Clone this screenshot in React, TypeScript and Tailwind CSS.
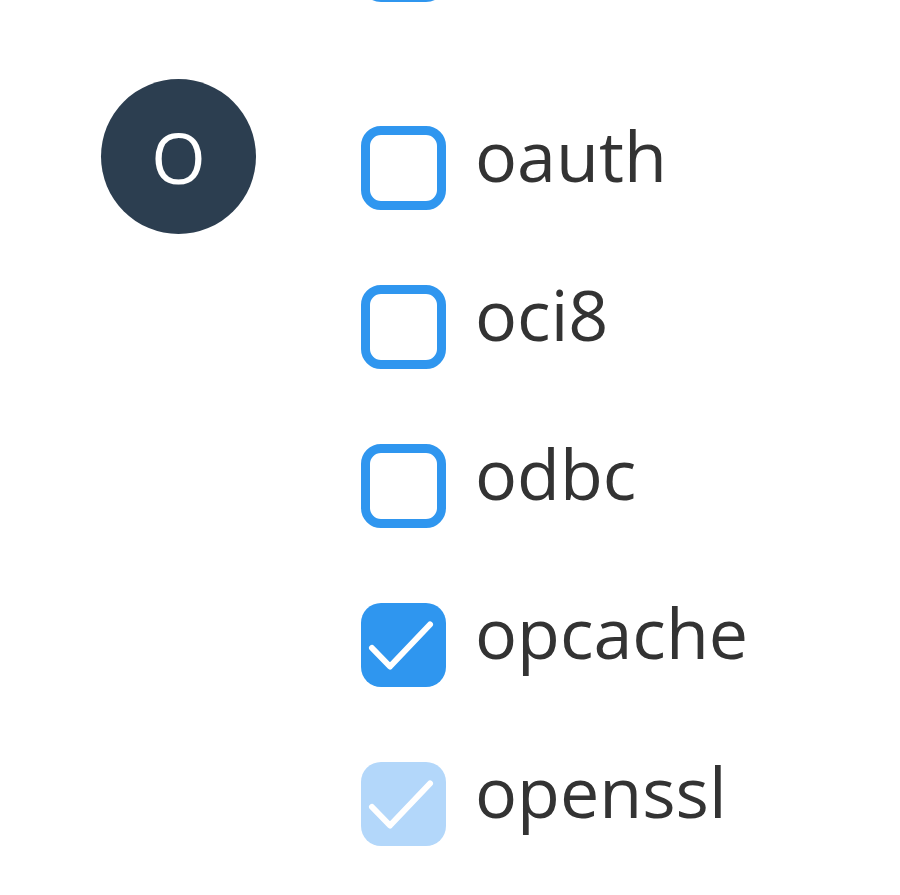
import React from 'react';

type Ext = { name: string; checked?: boolean; disabled?: boolean };

const groups: { letter: string; items: Ext[] }[] = [
  {
    letter: 'O',
    items: [
      { name: 'oauth' },
      { name: 'oci8' },
      { name: 'odbc' },
      { name: 'opcache', checked: true },
      { name: 'openssl', checked: true, disabled: true },
    ],
  },
];

const CheckBox: React.FC<{ checked?: boolean; disabled?: boolean }> = ({ checked, disabled }) => {
  if (!checked) {
    return <div className="w-[85px] h-[84px] shrink-0 rounded-[20px] border-[9px] border-[#2f96ef] bg-white" />;
  }
  return (
    <div
      className={
        disabled
          ? 'w-[85px] h-[84px] shrink-0 rounded-[20px] bg-[#b3d7fa]'
          : 'w-[85px] h-[84px] shrink-0 rounded-[20px] bg-[#2f96ef]'
      }
    >
      <svg width="85" height="84" viewBox="0 0 85 84" fill="none">
        <path d="M11 45 L29 63.5 L69 21.5" stroke="white" strokeWidth="6" strokeLinecap="round" strokeLinejoin="round" />
      </svg>
    </div>
  );
};

const Row: React.FC<{ ext: Ext }> = ({ ext }) => (
  <label className="flex items-start h-[159px]">
    <CheckBox checked={ext.checked} disabled={ext.disabled} />
    <span className="ml-[29px] -mt-[6px] text-[70px] leading-none text-[#333333]">{ext.name}</span>
  </label>
);

export default function App() {
  return (
    <div
      className="w-[900px] h-[895px] overflow-hidden bg-white"
      style={{ fontFamily: '"Open Sans", "Liberation Sans", sans-serif' }}
    >
      {/* tail of the previous group */}
      <div className="-mt-[82px] pl-[361px]">
        <div className="flex items-start">
          <CheckBox />
        </div>
      </div>

      {groups.map((g) => (
        <div key={g.letter} className="flex mt-[77px] pl-[101px]">
          <div className="w-[155px] h-[155px] shrink-0 rounded-full bg-[#2c3e50] flex items-center justify-center text-white text-[70px] leading-none">
            {g.letter}
          </div>
          <div className="ml-[105px] pt-[47px] flex flex-col">
            {g.items.map((ext) => (
              <Row key={ext.name} ext={ext} />
            ))}
          </div>
        </div>
      ))}
    </div>
  );
}
